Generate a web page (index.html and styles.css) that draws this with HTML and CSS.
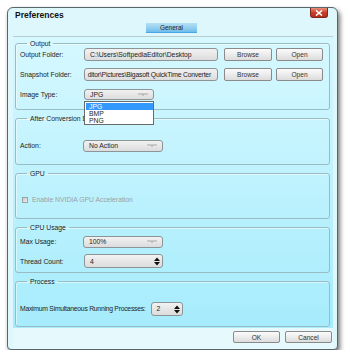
FILE: index.html
```html
<!DOCTYPE html>
<html lang="en">

<head>
    <meta charset="UTF-8">
    <title>Preferences</title>
    <link rel="stylesheet" href="styles.css">
</head>

<body>
    <div class="window">
        <div class="titlebar">
            <span class="title">Preferences</span>
            <span class="close">
                <svg width="8" height="6" viewBox="0 0 8 6"><path d="M1 0.5 L7 5.5 M7 0.5 L1 5.5" stroke="#fff" stroke-width="1.6"/></svg>
            </span>
        </div>
        <div class="tabs"><span class="tab">General</span></div>

        <div class="panel">
            <fieldset class="group g-output">
                <legend>Output</legend>
                <div class="row r1">
                    <label>Output Folder:</label>
                    <div class="field path">C:\Users\SoftpediaEditor\Desktop</div>
                    <button class="btn browse">Browse</button>
                    <button class="btn open">Open</button>
                </div>
                <div class="row r2">
                    <label>Snapshot Folder:</label>
                    <div class="field path tail">ditor\Pictures\Bigasoft QuickTime Converter</div>
                    <button class="btn browse">Browse</button>
                    <button class="btn open">Open</button>
                </div>
                <div class="row r3">
                    <label>Image Type:</label>
                    <div class="field combo small">JPG
                        <svg class="arrow" width="10" height="5" viewBox="0 0 10 5"><path d="M0 1 H10" stroke="#a8a8a8"/><path d="M3.5 1.5 H6.5 L5 3 Z" fill="#a8a8a8"/></svg>
                    </div>
                    <ul class="popup">
                        <li class="sel">JPG</li>
                        <li>BMP</li>
                        <li>PNG</li>
                    </ul>
                </div>
            </fieldset>

            <fieldset class="group">
                <legend>After Conversion Done</legend>
                <div class="row">
                    <label>Action:</label>
                    <div class="field combo">No Action
                        <svg class="arrow" width="10" height="5" viewBox="0 0 10 5"><path d="M0 1 H10" stroke="#a8a8a8"/><path d="M3.5 1.5 H6.5 L5 3 Z" fill="#a8a8a8"/></svg>
                    </div>
                </div>
            </fieldset>

            <fieldset class="group">
                <legend>GPU</legend>
                <div class="row check">
                    <span class="box"></span>
                    <span class="disabled">Enable NVIDIA GPU Acceleration</span>
                </div>
            </fieldset>

            <fieldset class="group g-cpu">
                <legend>CPU Usage</legend>
                <div class="row">
                    <label>Max Usage:</label>
                    <div class="field combo">100%
                        <svg class="arrow" width="10" height="5" viewBox="0 0 10 5"><path d="M0 1 H10" stroke="#a8a8a8"/><path d="M3.5 1.5 H6.5 L5 3 Z" fill="#a8a8a8"/></svg>
                    </div>
                </div>
                <div class="row r-thread">
                    <label>Thread Count:</label>
                    <div class="field spin">4
                        <svg class="arrows" width="6" height="9" viewBox="0 0 6 9"><path d="M0 4 L3 0.5 L6 4 Z M0 5 L6 5 L3 8.5 Z" fill="#111"/></svg>
                    </div>
                </div>
            </fieldset>

            <fieldset class="group">
                <legend>Process</legend>
                <div class="row">
                    <label class="wide">Maximum Simultaneous Running Processes:</label>
                    <div class="field spin tiny">2
                        <svg class="arrows" width="6" height="9" viewBox="0 0 6 9"><path d="M0 4 L3 0.5 L6 4 Z M0 5 L6 5 L3 8.5 Z" fill="#111"/></svg>
                    </div>
                </div>
            </fieldset>
        </div>

        <div class="footer">
            <button class="btn foot">OK</button>
            <button class="btn foot">Cancel</button>
        </div>
    </div>
</body>

</html>
```
FILE: styles.css
```css
* {
    margin: 0;
    padding: 0;
    box-sizing: border-box;
}

body {
    background: #fff;
    font-family: "Liberation Sans", Arial, sans-serif;
    font-size: 6.8px;
    color: #1c1c1c;
}

.window {
    width: 331px;
    height: 343px;
    margin: 7px 0 0 7px;
    border: 1px solid #56666c;
    border-radius: 6px 6px 4px 4px;
    background: #ddf7fc;
    box-shadow: 2px 3px 5px rgba(0, 0, 0, 0.55);
    padding: 0 4px 0 5px;
    display: flex;
    flex-direction: column;
}

.titlebar {
    height: 15px;
    display: flex;
    align-items: flex-start;
    justify-content: space-between;
}

.title {
    font-weight: bold;
    font-size: 8.5px;
    margin: 2px 0 0 2px;
    color: #111;
}

.close {
    width: 18px;
    height: 10px;
    margin-right: 5px;
    border: 1px solid #7a2a20;
    border-top: none;
    border-radius: 0 0 3px 3px;
    background: linear-gradient(#e8907e, #c8402c 50%, #b82c18);
    display: flex;
    align-items: center;
    justify-content: center;
}

.tabs {
    height: 13px;
    display: flex;
    justify-content: center;
    padding-right: 3px;
}

.tab {
    width: 51px;
    height: 10px;
    line-height: 10px;
    text-align: center;
    font-size: 6.5px;
    color: #223;
    background: linear-gradient(#b6e0f4, #8ecdef 60%, #6fbceb);
    border-bottom: 1px solid #4aa8e8;
}

.panel {
    height: 292px;
    background: linear-gradient(#d6f8ff, #a6ecfc);
    border-top: 1px solid #b4ccd2;
    padding: 3px 3px 0 2px;
    display: flex;
    flex-direction: column;
    gap: 5px;
}

.group {
    border: 1px solid #98bcc4;
    border-radius: 3px;
    box-shadow: inset 1px 1px 0 rgba(255, 255, 255, 0.5);
    height: 49px;
    padding: 0 0 0 4px;
}

.group legend {
    margin-left: 7px;
    padding: 0 3px;
    line-height: 7px;
    height: 7px;
    font-size: 6.8px;
}

.g-output {
    height: 70px;
}

.g-output + .group {
    height: 50px;
}

.row {
    display: flex;
    align-items: center;
    height: 13px;
    margin-top: 17px;
}

.g-output .r1 {
    margin-top: 1px;
}

.g-output .r2 {
    margin-top: 7px;
}

.g-output .r3 {
    margin-top: 8px;
    height: 11px;
    position: relative;
}

.g-cpu .row {
    margin-top: 4px;
}

.g-cpu .r-thread {
    margin-top: 6px;
    height: 14px;
}

label {
    width: 64px;
    flex: none;
}

label.wide {
    width: auto;
    margin-right: 5px;
    letter-spacing: -0.25px;
}

.field {
    height: 13px;
    border: 1px solid #8c9498;
    border-radius: 3px;
    background: linear-gradient(#f2f2f2, #dcdcdc);
    padding: 0 5px;
    display: flex;
    align-items: center;
    white-space: nowrap;
    overflow: hidden;
    position: relative;
}

.path {
    width: 134px;
    margin-right: 6px;
}

.path.tail {
    justify-content: flex-end;
    padding-right: 6px;
    letter-spacing: -0.2px;
}

.combo {
    width: 80px;
    height: 12px;
    margin-left: -1px;
}

.combo.small {
    width: 70px;
    height: 11px;
    margin-left: 0;
}

.combo .arrow {
    position: absolute;
    right: 5px;
    top: 3px;
}

.spin {
    width: 79px;
    height: 14px;
}

.spin .arrows {
    position: absolute;
    right: 2px;
    top: 2px;
}

.spin.tiny {
    width: 32px;
}

.btn {
    font-family: inherit;
    font-size: 6.6px;
    color: #333;
    height: 13px;
    border: 1px solid #8a8a8a;
    border-radius: 2px;
    background: linear-gradient(#fbfbfb, #ececec 50%, #dcdcdc);
}

.browse {
    width: 48px;
    margin-right: 4px;
}

.open {
    width: 47px;
}

.popup {
    position: absolute;
    left: 64px;
    top: 12px;
    width: 70px;
    height: 24px;
    list-style: none;
    background: #fff;
    border: 1px solid #6a6a6a;
    padding: 1px 0 0 1px;
    z-index: 2;
}

.popup li {
    height: 7px;
    line-height: 7px;
    padding-left: 3px;
}

.popup li.sel {
    background: #3399ff;
    color: #fff;
}

.check {
    margin-top: 16px;
    padding-left: 2px;
}

.box {
    width: 6px;
    height: 6px;
    border: 1px solid #9aa4a8;
    background: linear-gradient(135deg, #c8c8c8, #eee);
    margin-right: 4px;
}

.disabled {
    color: #9aa2a4;
}

.footer {
    flex: 1;
    display: flex;
    justify-content: flex-end;
    align-items: flex-start;
    gap: 5px;
    padding: 3px 1px 0 0;
    background: #e6f9fd;
}

.foot {
    width: 47px;
    height: 12px;
}
```
